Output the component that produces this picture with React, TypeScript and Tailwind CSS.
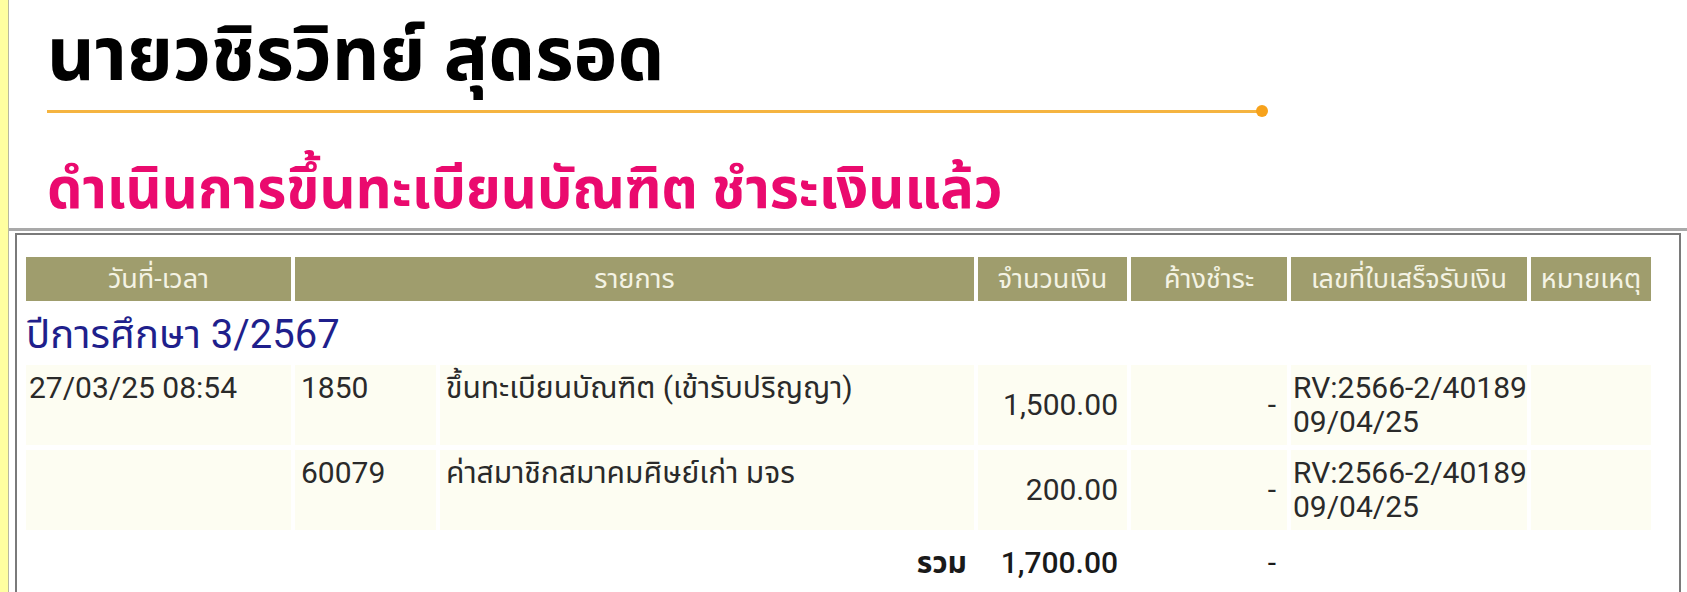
const rows = [
  {
    date: '27/03/25 08:54',
    code: '1850',
    name: 'ขึ้นทะเบียนบัณฑิต (เข้ารับปริญญา)',
    amount: '1,500.00',
    receipt: ['RV:2566-2/40189', '09/04/25'],
  },
  {
    date: '',
    code: '60079',
    name: 'ค่าสมาชิกสมาคมศิษย์เก่า มจร',
    amount: '200.00',
    receipt: ['RV:2566-2/40189', '09/04/25'],
  },
];

const grid = 'grid grid-cols-[265px_141px_534px_149px_156px_236px_120px] gap-x-[4px]';
const th = 'flex h-[44px] items-center justify-center bg-[#9f9d6d] text-[27px] text-[#f4f3e4]';
const td = 'bg-[#fdfdf2] py-[6px] text-[30px] leading-[34px] text-[#2a2a2a]';

export default function App() {
  return (
    <div className="flex h-[592px] overflow-hidden bg-[#ffffa0] font-['Roboto','Noto_Sans_Thai','Noto_Sans',sans-serif]">
      <div className="w-[8px] shrink-0" />
      <div className="flex-1 border-l border-[#b8b8a0] bg-white">
        <div className="pl-[38px] pt-[13px]">
          <h1 className="text-[74px] font-bold leading-[84px] text-black">นายวชิรวิทย์ สุดรอด</h1>
          <div className="mt-[8px] flex w-[1221px] items-center">
            <div className="h-[3px] flex-1 bg-[#f5b440]" />
            <div className="-ml-[2px] h-[12px] w-[12px] rounded-full bg-[#f7a21b]" />
          </div>
          <h2 className="mt-[39px] text-[56px] font-bold leading-[66px] text-[#ea0a6e]">
            ดำเนินการขึ้นทะเบียนบัณฑิต ชำระเงินแล้ว
          </h2>
        </div>
        <div className="mt-[6px] border-t-[3px] border-[#a9a9a9] px-[6px] pt-[2px]">
          <div className="h-[400px] border-2 border-[#7a7a7a] pl-[9px] pt-[22px]">
            <div className={grid}>
              <div className={th}>วันที่-เวลา</div>
              <div className={`${th} col-span-2`}>รายการ</div>
              <div className={th}>จำนวนเงิน</div>
              <div className={th}>ค้างชำระ</div>
              <div className={th}>เลขที่ใบเสร็จรับเงิน</div>
              <div className={th}>หมายเหตุ</div>

              <div className="col-span-7 pb-[8px] pt-[12px] text-[40px] leading-[44px] text-[#1f1f8c]">
                ปีการศึกษา 3/2567
              </div>

              {rows.map((r, i) => (
                <div key={r.code} className={`col-span-7 grid grid-cols-subgrid ${i > 0 ? 'mt-[5px]' : ''}`}>
                  <div className={`${td} pl-[3px]`}>{r.date}</div>
                  <div className={`${td} pl-[6px]`}>{r.code}</div>
                  <div className={`${td} pl-[6px]`}>{r.name}</div>
                  <div className={`${td} flex items-center justify-end pr-[9px]`}>{r.amount}</div>
                  <div className={`${td} flex items-center justify-end pr-[11px]`}>-</div>
                  <div className={`${td} pl-[2px]`}>
                    {r.receipt.map((l) => (
                      <div key={l}>{l}</div>
                    ))}
                  </div>
                  <div className={td} />
                </div>
              ))}

              <div className="col-span-7 mt-[15px] grid grid-cols-subgrid text-[30px] leading-[36px] text-[#1a1a1a]">
                <div />
                <div />
                <div className="pr-[7px] text-right font-bold">รวม</div>
                <div className="pr-[9px] text-right font-medium">1,700.00</div>
                <div className="pr-[11px] text-right">-</div>
                <div />
                <div />
              </div>
            </div>
          </div>
        </div>
      </div>
    </div>
  );
}
